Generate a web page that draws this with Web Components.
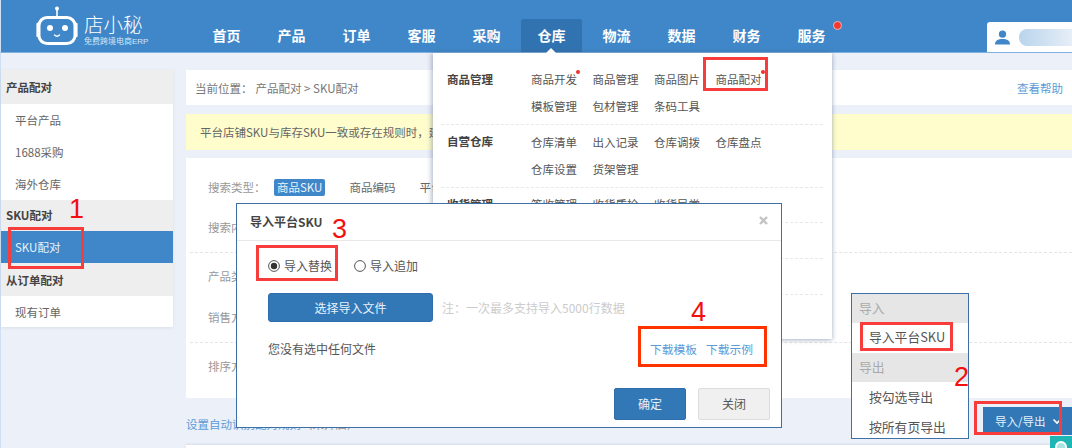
<!DOCTYPE html>
<html lang="zh">
<head>
<meta charset="utf-8">
<title>店小秘</title>
<style>
html, body { margin: 0; padding: 0; }
body { font: 11.5px/16px "Noto Sans CJK SC", "Liberation Sans", sans-serif; color: #555; }
</style>
</head>
<body>
<erp-page></erp-page>
<script>
// small helper: every element is a class with its own open shadow root
function component (name, css, html) {
  customElements.define(name, class extends HTMLElement {
    constructor () {
      super()
      this.attachShadow({ mode: 'open' }).innerHTML = '<style>' + css + '</style>' + html
    }
  })
}

component('erp-page', `
  :host { display: flex; flex-direction: column; position: relative; width: 1072px; height: 448px; overflow: hidden; background: #ecf0f8; }
  .body { display: flex; flex: 1; min-height: 0; border-left: 1px solid #cfe0f3; padding-top: 17px; }
  .main { flex: 1; display: flex; flex-direction: column; margin-left: 13px; }
  .main > * { flex: none; }
`, `
  <erp-header></erp-header>
  <div class="body">
    <side-menu></side-menu>
    <div class="main">
      <crumb-bar></crumb-bar>
      <notice-bar></notice-bar>
      <search-card></search-card>
      <auto-link></auto-link>
      <list-card></list-card>
    </div>
  </div>
  <nav-dropdown></nav-dropdown>
  <import-modal></import-modal>
  <io-menu></io-menu>
  <io-button></io-button>
  <help-bubble></help-bubble>
  <mark-box style="left:8px;top:227px;width:76px;height:42px"></mark-box>
  <mark-box style="left:703px;top:57px;width:65px;height:34px"></mark-box>
  <mark-box style="left:256px;top:245px;width:82px;height:36px"></mark-box>
  <mark-box style="left:638px;top:326px;width:129px;height:41px;border-color:#ff3300"></mark-box>
  <mark-box style="left:860px;top:322px;width:93px;height:29px"></mark-box>
  <mark-box style="left:974px;top:401px;width:88px;height:34px"></mark-box>
  <mark-num style="left:69px;top:194px">1</mark-num>
  <mark-num style="left:954px;top:362px">2</mark-num>
  <mark-num style="left:332px;top:214px">3</mark-num>
  <mark-num style="left:691px;top:297px">4</mark-num>
`)

component('erp-header', `
  :host { display: flex; flex: none; height: 52px; background: #3f87c8; border-left: 1px solid #cfe0f3; border-bottom: 1px solid #7fb0de; }
  nav { display: flex; align-items: flex-end; margin-left: 17px; }
  .user { margin-left: auto; align-self: flex-end; }
  .on { background: #3173b0; border-radius: 2px 2px 0 0; }
  .dot { position: absolute; left: 52px; top: 2px; width: 7px; height: 7px; border-radius: 50%; background: #f4372f; border: 1px solid #e9b6b8; }
`, `
  <erp-logo></erp-logo>
  <nav>
    <nav-item>首页</nav-item><nav-item>产品</nav-item><nav-item>订单</nav-item><nav-item>客服</nav-item><nav-item>采购</nav-item>
    <nav-item class="on">仓库</nav-item>
    <nav-item>物流</nav-item><nav-item>数据</nav-item><nav-item>财务</nav-item><nav-item>服务<i class="dot"></i></nav-item>
  </nav>
  <user-box class="user"></user-box>
`)

component('erp-logo', `
  :host { display: flex; flex: none; width: 142px; padding-left: 34px; gap: 5px; font-family: "Liberation Sans", "Noto Sans CJK SC", sans-serif; }
  svg { margin-top: 6px; flex: none; }
  .txt { display: flex; flex-direction: column; margin-top: 13px; color: #fff; }
  .name { font-size: 19.5px; line-height: 24px; font-weight: 300; }
  .sub { font-size: 8px; line-height: 10px; color: #d5e6f6; white-space: nowrap; }
`, `
  <svg width="44" height="40" viewBox="0 0 44 40" fill="none">
    <circle cx="22" cy="2.5" r="2" fill="#fff"/>
    <path d="M22 3v8" stroke="#fff" stroke-width="1.6"/>
    <rect x="4" y="11.5" width="36" height="26" rx="8" stroke="#fff" stroke-width="3"/>
    <path d="M2.600 18v12M41.400 18v12" stroke="#fff" stroke-width="2.400" stroke-linecap="round"/>
    <circle cx="15" cy="22" r="3" fill="#fff"/>
    <circle cx="30" cy="22" r="3" fill="#fff"/>
    <path d="M19.500 29c1.600 1.500 3.400 1.500 5 0" stroke="#fff" stroke-width="1.400" stroke-linecap="round"/>
  </svg>
  <div class="txt"><span class="name">店小秘</span><span class="sub">免费跨境电商ERP</span></div>
`)

component('nav-item', `
  :host { display: block; position: relative; width: 61px; margin: 0 2px; height: 33px; line-height: 33px; text-align: center; color: #fff; font-size: 14px; font-weight: 700; }
`, '<slot></slot>')

component('user-box', `
  :host { display: flex; align-items: center; width: 85px; height: 30px; background: #fff; border-radius: 3px 0 0 0; }
  svg { margin-left: 8px; flex: none; }
  .pill { width: 60px; height: 17px; margin-left: 9px; border-radius: 8px 0 0 8px; background: linear-gradient(90deg, #b9d4ec, #e6eef7); }
`, `
  <svg width="15" height="15" viewBox="0 0 15 15" fill="#3f87c8"><circle cx="7.500" cy="4.200" r="3.600"/><path d="M0 14.500c0-4 3-5.500 7.500-5.500s7.500 1.500 7.500 5.500z"/></svg>
  <div class="pill"></div>
`)

component('side-menu', `
  :host { display: block; flex: none; width: 172px; height: 257px; background: #fff; box-shadow: 0 1px 3px rgba(90,110,150,.12); }
`, `
  <side-head style="height:33.5px">产品配对</side-head>
  <side-link>平台产品</side-link>
  <side-link>1688采购</side-link>
  <side-link>海外仓库</side-link>
  <side-head style="height:31.5px">SKU配对</side-head>
  <side-link style="background:#3f87c8;color:#e8f2fb">SKU配对</side-link>
  <side-head style="height:33px">从订单配对</side-head>
  <side-link style="height:31px">现有订单</side-link>
`)

component('side-head', `
  :host { display: flex; align-items: center; background: #eee; padding-left: 5px; font-weight: 700; color: #444; }
`, '<slot></slot>')

component('side-link', `
  :host { display: flex; align-items: center; height: 32px; padding-left: 14px; color: #666; }
`, '<slot></slot>')

component('crumb-bar', `
  :host { display: flex; align-items: center; height: 35px; background: #fff; padding: 0 9px; color: #777; white-space: nowrap; }
  .at { margin-right: 3px; }
  a { margin-left: auto; color: #5c9bd6; }
`, `
  <span class="at">当前位置：</span><span>产品配对 &gt; SKU配对</span><a>查看帮助</a>
`)

component('notice-bar', `
  :host { display: flex; align-items: center; height: 36px; margin-top: 9px; background: #fefdcb; padding-left: 14px; color: #666; white-space: nowrap; }
`, '平台店铺SKU与库存SKU一致或存在规则时，建议您使用自动配对')

component('search-card', `
  :host { display: block; height: 240px; margin-top: 8px; background: #fff; box-sizing: border-box; padding: 19px 22px 0 22px; color: #999; }
  .row { display: flex; align-items: center; height: 20px; gap: 24px; white-space: nowrap; }
  .label { width: 66px; margin-right: -24px; }
  .sel { background: #3f87c8; color: #e8f2fb; padding: 0 3px; border-radius: 2px; line-height: 17px; }
  .opt { color: #666; }
  hr { border: 0; border-top: 1px dashed #e4e4e4; margin: 0 -22px 0 -18px; }
`, `
  <div class="row"><span class="label">搜索类型：</span><span class="sel">商品SKU</span><span class="opt">商品编码</span><span class="opt">平台SKU</span></div>
  <div class="row" style="margin-top:20px"><span class="label">搜索内</span></div>
  <hr style="margin-top:15px">
  <div class="row" style="margin-top:13px"><span class="label">产品类</span></div>
  <div class="row" style="margin-top:21px"><span class="label">销售方</span></div>
  <hr style="margin-top:15px">
  <div class="row" style="margin-top:13px"><span class="label">排序方</span></div>
`)

component('auto-link', `
  :host { display: flex; align-items: center; height: 16px; margin-top: 18px; color: #5c9bd6; white-space: nowrap; }
  span { color: #999; }
`, '设置自动识别配对规则<span>（未开启）</span>')

component('list-card', `
  :host { display: block; height: 40px; margin-top: 13px; background: #fff; box-shadow: 0 -1px 2px rgba(90,110,150,.15); }
`, '')

component('nav-dropdown', `
  :host { position: absolute; left: 433px; top: 53px; width: 399px; height: 286px; background: #fff; box-shadow: -2px 0 5px rgba(80,100,140,.35), 1px 1px 4px rgba(80,100,140,.3); color: #555; }
  .caret { position: absolute; left: 112px; top: -5px; border: 6px solid transparent; border-top: 0; border-bottom-color: #fff; }
  .group { display: grid; grid-template-columns: 84px repeat(4, 61.5px); grid-auto-rows: 27px; align-items: center; margin: 0 9px 0 8px; padding: 3px 0 4.5px 6px; border-bottom: 1px dashed #e8e8e8; white-space: nowrap; }
  .group.first { padding-top: 12.5px; }
  .group b { color: #444; grid-row: span 2; align-self: start; line-height: 27px; }
  .group b.one { grid-row: span 1; }
  .empty { height: 35px; margin: 0 9px 0 8px; border-bottom: 1px dashed #e8e8e8; }
  span { position: relative; }
  i { position: absolute; left: 45px; top: -1px; width: 4px; height: 4px; border-radius: 50%; background: #f0312d; }
`, `
  <div class="caret"></div>
  <div class="group first"><b>商品管理</b><span>商品开发<i></i></span><span>商品管理</span><span>商品图片</span><span>商品配对<i></i></span><span>模板管理</span><span>包材管理</span><span>条码工具</span></div>
  <div class="group"><b>自营仓库</b><span>仓库清单</span><span>出入记录</span><span>仓库调拨</span><span>仓库盘点</span><span>仓库设置</span><span>货架管理</span></div>
  <div class="group"><b class="one">收货管理</b><span>签收管理</span><span>收货质检</span><span>收货异常</span></div>
  <div class="empty"></div>
  <div class="empty"></div>
`)

component('import-modal', `
  :host { position: absolute; left: 236px; top: 203px; width: 546px; height: 225px; box-sizing: border-box; display: flex; flex-direction: column; background: #fff; border: 1px solid #3d70a6; color: #555; white-space: nowrap; font-size: 12px; }
  header { display: flex; align-items: center; height: 36px; padding: 0 13px 0 13px; border-bottom: 1px solid #e8e8e8; font-weight: 700; color: #444; }
  header svg { margin-left: auto; margin-top: -3px; }
  .radios { display: flex; align-items: center; gap: 4px; height: 50px; padding-left: 31px; }
  .radios span + radio-dot { margin-left: 18px; }
  .pick { display: flex; align-items: center; margin-top: 2px; padding-left: 31px; gap: 9px; }
  .pick button { width: 165px; height: 29px; font: inherit; color: #e8f2fb; background: #3278b6; border: 1px solid #2f6ea8; border-radius: 3px; padding: 0; }
  .pick em { font-style: normal; color: #ccc; }
  .file { display: flex; align-items: center; height: 16px; margin-top: 19px; padding: 0 28px 0 31px; }
  .file a { color: #5c9bd6; margin-left: 9px; font-size: 11.75px; }
  .file a:first-of-type { margin-left: auto; }
  footer { display: flex; gap: 12px; justify-content: flex-end; margin-top: auto; padding: 0 11px 7px 0; }
  footer button { width: 72px; height: 32px; font: inherit; border-radius: 2px; padding: 0; }
  .ok { background: #3278b6; border: 1px solid #2f6ea8; color: #e8f2fb; }
  .no { background: #f0f0f0; border: 1px solid #dcdcdc; color: #555; }
`, `
  <header>导入平台SKU<svg width="9" height="9" viewBox="0 0 9 9"><path d="M1 1l7 7M8 1L1 8" stroke="#c4c4c4" stroke-width="2.400"/></svg></header>
  <div class="radios"><radio-dot checked></radio-dot><span>导入替换</span><radio-dot></radio-dot><span>导入追加</span></div>
  <div class="pick"><button>选择导入文件</button><em>注：一次最多支持导入5000行数据</em></div>
  <div class="file"><span>您没有选中任何文件</span><a>下载模板</a><a>下载示例</a></div>
  <footer><button class="ok">确定</button><button class="no">关闭</button></footer>
`)

class RadioDot extends HTMLElement {
  constructor () {
    super()
    this.attachShadow({ mode: 'open' }).innerHTML = `
      <style>:host { display: inline-flex; width: 12px; height: 12px; }</style>
      <svg width="12" height="12" viewBox="0 0 12 12"><circle cx="6" cy="6" r="5.400" fill="#fff" stroke="#555" stroke-width="1"/><circle id="on" cx="6" cy="6" r="3.200" fill="none"/></svg>`
  }

  connectedCallback () {
    if (this.hasAttribute('checked')) this.shadowRoot.querySelector('#on').setAttribute('fill', '#333')
  }
}
customElements.define('radio-dot', RadioDot)

component('io-menu', `
  :host { position: absolute; left: 851px; top: 293px; width: 118px; height: 146px; box-sizing: border-box; background: #fff; border: 1px solid #3d70a6; display: flex; flex-direction: column; white-space: nowrap; font-size: 12.8px; }
  .h, .i { display: flex; flex: none; align-items: center; height: 29px; box-sizing: border-box; }
  .h { padding: 0 0 1px 7px; background: #e6e6e6; color: #aaa; }
  .i { padding: 0 0 1px 17px; color: #555; }
`, `
  <div class="h">导入</div>
  <div class="i">导入平台SKU</div>
  <div class="h" style="margin-top:1px">导出</div>
  <div class="i" style="padding:1px 0 0 17px">按勾选导出</div>
  <div class="i" style="padding:3px 0 0 17px">按所有页导出</div>
`)

component('io-button', `
  :host { position: absolute; left: 983px; top: 407px; width: 89px; height: 28px; display: flex; align-items: center; gap: 6px; padding-left: 12px; box-sizing: border-box; background: #3278b6; color: #e8f2fb; white-space: nowrap; }
`, `
  <span>导入/导出</span>
  <svg width="10" height="7" viewBox="0 0 10 7" fill="none"><path d="M1.500 1.500L5 5l3.500-3.500" stroke="#fff" stroke-width="1.600"/></svg>
`)

component('help-bubble', `
  :host { position: absolute; left: 1050px; top: 436px; width: 22px; height: 12px; background: #1eb6b4; overflow: hidden; display: flex; justify-content: center; }
  div { width: 12px; height: 12px; margin-top: 5px; border-radius: 50%; border: 2px solid #fff; box-sizing: border-box; background: #a8e4e2; }
`, '<div></div>')

component('mark-box', `
  :host { position: absolute; box-sizing: border-box; border: 3px solid #f73c3c; pointer-events: none; }
`, '')

component('mark-num', `
  :host { position: absolute; color: #f40f0f; font: 27px/30px "Liberation Sans", sans-serif; }
`, '<slot></slot>')
</script>
</body>
</html>
